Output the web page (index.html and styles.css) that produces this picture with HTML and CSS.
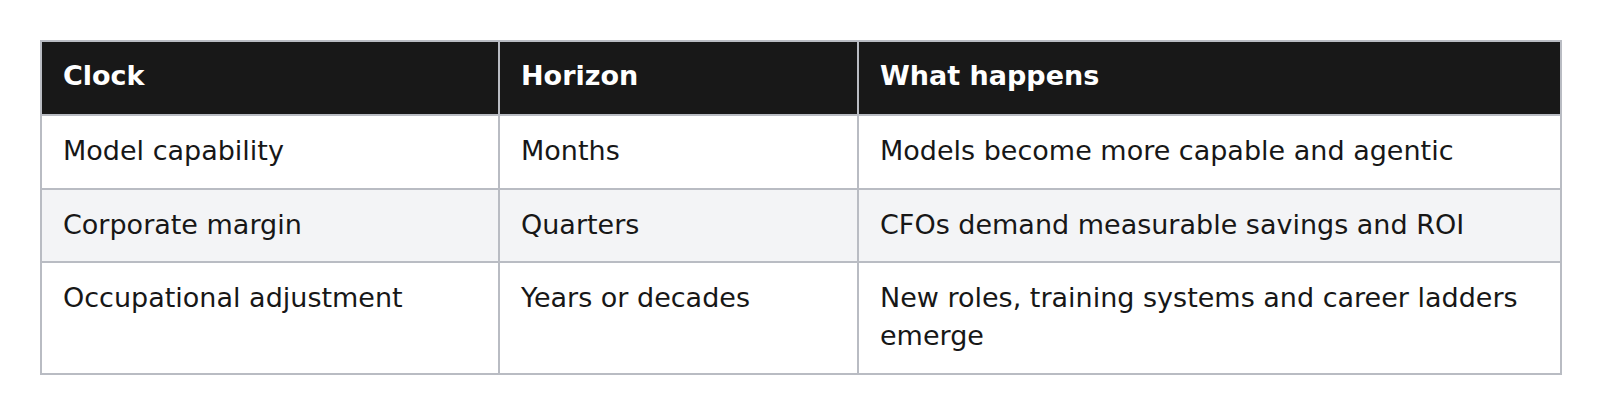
FILE: index.html
```html
<!DOCTYPE html>
<html>
<head>
<meta charset="utf-8">
<link rel="stylesheet" href="styles.css">
</head>
<body>
<table class="clocks">
  <colgroup>
    <col class="c1"><col class="c2"><col class="c3">
  </colgroup>
  <thead>
    <tr><th>Clock</th><th>Horizon</th><th>What happens</th></tr>
  </thead>
  <tbody>
    <tr><td>Model capability</td><td>Months</td><td>Models become more capable and agentic</td></tr>
    <tr class="alt"><td>Corporate margin</td><td>Quarters</td><td>CFOs demand measurable savings and ROI</td></tr>
    <tr><td>Occupational adjustment</td><td>Years or decades</td><td>New roles, training systems and career ladders emerge</td></tr>
  </tbody>
</table>
</body>
</html>
```
FILE: styles.css
```css
html, body { margin: 0; padding: 0; background: #ffffff; }
body { padding: 40px 40px 0 40px; font-family: "DejaVu Sans", sans-serif; }
.clocks {
  border-collapse: collapse;
  table-layout: fixed;
  width: 1520px;
  font-size: 27px;
  line-height: 1.4;
  color: #171717;
}
.c1 { width: 458px; }
.c2 { width: 359px; }
.c3 { width: 703px; }
.clocks th, .clocks td {
  border: 2px solid #b9bcc3;
  padding: 16px 21px 18px;
  text-align: left;
  vertical-align: top;
}
.clocks th {
  background: #181818;
  color: #ffffff;
  font-weight: bold;
  padding-top: 15px;
  padding-bottom: 19px;
}
.clocks tr.alt td { background: #f3f4f6; }
```
